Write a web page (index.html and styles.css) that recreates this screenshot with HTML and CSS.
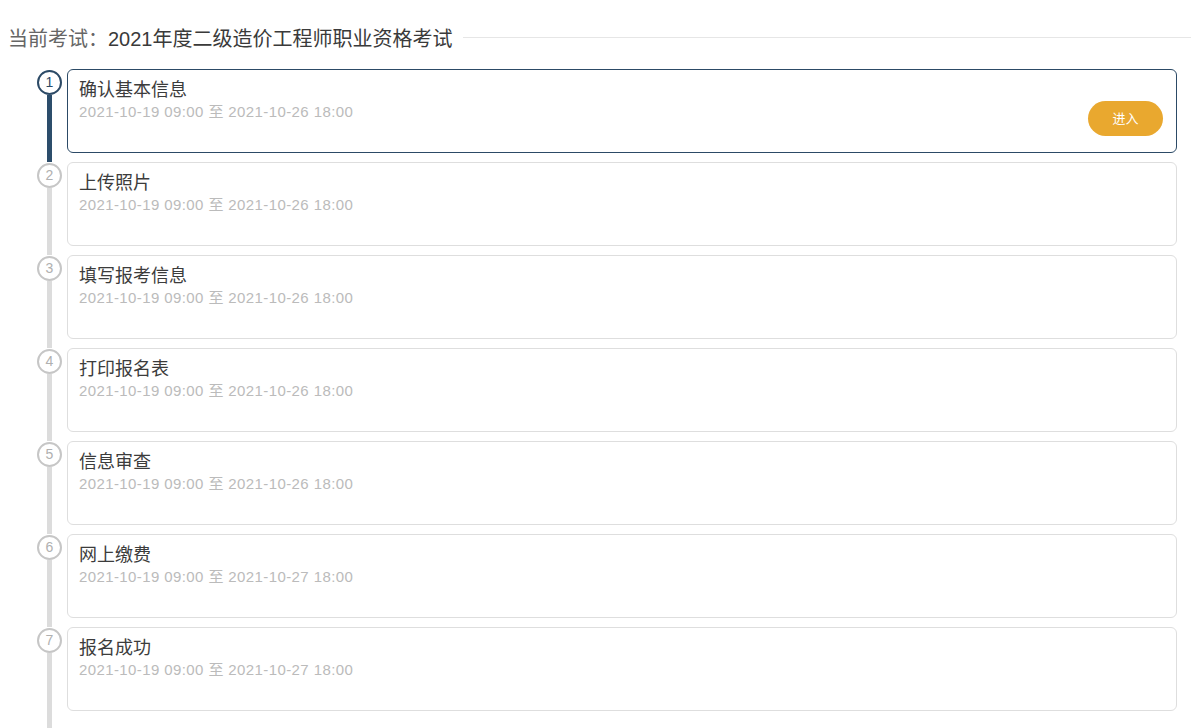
FILE: index.html
```html
<html><head>
	<meta charset="utf-8">
	<title>报名流程</title>
	<link rel="stylesheet" href="styles.css">
</head>
<body>
	<div class="exam-head">
		<span class="exam-title"><span class="label">当前考试：</span>2021年度二级造价工程师职业资格考试</span>
		<span class="head-line"></span>
	</div>

	<!--报名步骤-->
	<ul class="steps">
		<li class="step step-active">
			<div class="rail"><span class="num">1</span><span class="line"></span></div>
			<div class="card">
				<div class="info">
					<p class="name">确认基本信息</p>
					<p class="time">2021-10-19 09:00 至 2021-10-26 18:00</p>
				</div>
				<a href="javascript:void(0)" class="btn-enter">进入</a>
			</div>
		</li>
		<li class="step">
			<div class="rail"><span class="num">2</span><span class="line"></span></div>
			<div class="card">
				<div class="info">
					<p class="name">上传照片</p>
					<p class="time">2021-10-19 09:00 至 2021-10-26 18:00</p>
				</div>
			</div>
		</li>
		<li class="step">
			<div class="rail"><span class="num">3</span><span class="line"></span></div>
			<div class="card">
				<div class="info">
					<p class="name">填写报考信息</p>
					<p class="time">2021-10-19 09:00 至 2021-10-26 18:00</p>
				</div>
			</div>
		</li>
		<li class="step">
			<div class="rail"><span class="num">4</span><span class="line"></span></div>
			<div class="card">
				<div class="info">
					<p class="name">打印报名表</p>
					<p class="time">2021-10-19 09:00 至 2021-10-26 18:00</p>
				</div>
			</div>
		</li>
		<li class="step">
			<div class="rail"><span class="num">5</span><span class="line"></span></div>
			<div class="card">
				<div class="info">
					<p class="name">信息审查</p>
					<p class="time">2021-10-19 09:00 至 2021-10-26 18:00</p>
				</div>
			</div>
		</li>
		<li class="step">
			<div class="rail"><span class="num">6</span><span class="line"></span></div>
			<div class="card">
				<div class="info">
					<p class="name">网上缴费</p>
					<p class="time">2021-10-19 09:00 至 2021-10-27 18:00</p>
				</div>
			</div>
		</li>
		<li class="step">
			<div class="rail"><span class="num">7</span><span class="line"></span></div>
			<div class="card">
				<div class="info">
					<p class="name">报名成功</p>
					<p class="time">2021-10-19 09:00 至 2021-10-27 18:00</p>
				</div>
			</div>
		</li>
	</ul>
</body></html>
```

FILE: styles.css
```css
* {
	margin: 0;
	padding: 0;
}

ul {
	list-style: none;
}

body {
	font-family: "Liberation Sans", "Noto Sans CJK SC", sans-serif;
	color: #333;
	background: #fff;
}

.exam-head {
	display: flex;
	align-items: center;
	height: 36px;
	margin-top: 19px;
	padding-left: 8px;
}
.exam-title {
	font-size: 20px;
	color: #3a3a3a;
	white-space: nowrap;
}
.exam-title .label {
	color: #666;
}
.head-line {
	flex: 1;
	margin-left: 10px;
	border-top: 1px solid #e6e6e6;
}

.steps {
	margin: 14px 14px 0 37px;
}

.step {
	display: flex;
}

.rail {
	display: flex;
	flex-direction: column;
	align-items: center;
	width: 25px;
	margin-right: 5px;
}
.num {
	display: block;
	box-sizing: border-box;
	width: 25px;
	height: 25px;
	margin-top: 1px;
	border: 2px solid #c6c6c6;
	border-radius: 50%;
	text-align: center;
	line-height: 21px;
	font-size: 14px;
	color: #b0b0b0;
	background: #fff;
}
.line {
	flex: 1;
	width: 5px;
	background: #dcdcdc;
}
.step-active .num {
	border-color: #2c4a66;
	color: #2c4a66;
}
.step-active .line {
	background: #2c4d6b;
}

.card {
	flex: 1;
	display: flex;
	justify-content: space-between;
	box-sizing: border-box;
	height: 84px;
	margin-bottom: 9px;
	padding: 8px 13px 0 11px;
	border: 1px solid #dedede;
	border-radius: 6px;
	background: #fff;
}
.step-active .card {
	border-color: #2c4a66;
}
.step:last-child .card {
	margin-bottom: 30px;
}

.name {
	font-size: 18px;
	line-height: 24px;
	color: #3c3c3c;
}
.time {
	font-size: 15px;
	line-height: 20px;
	letter-spacing: 0.4px;
	color: #bbb;
}

.btn-enter {
	align-self: flex-end;
	width: 75px;
	height: 35px;
	margin-bottom: 16px;
	border-radius: 18px;
	background: #e9a82f;
	color: #fff;
	font-size: 13px;
	line-height: 35px;
	text-align: center;
	text-decoration: none;
}
```
